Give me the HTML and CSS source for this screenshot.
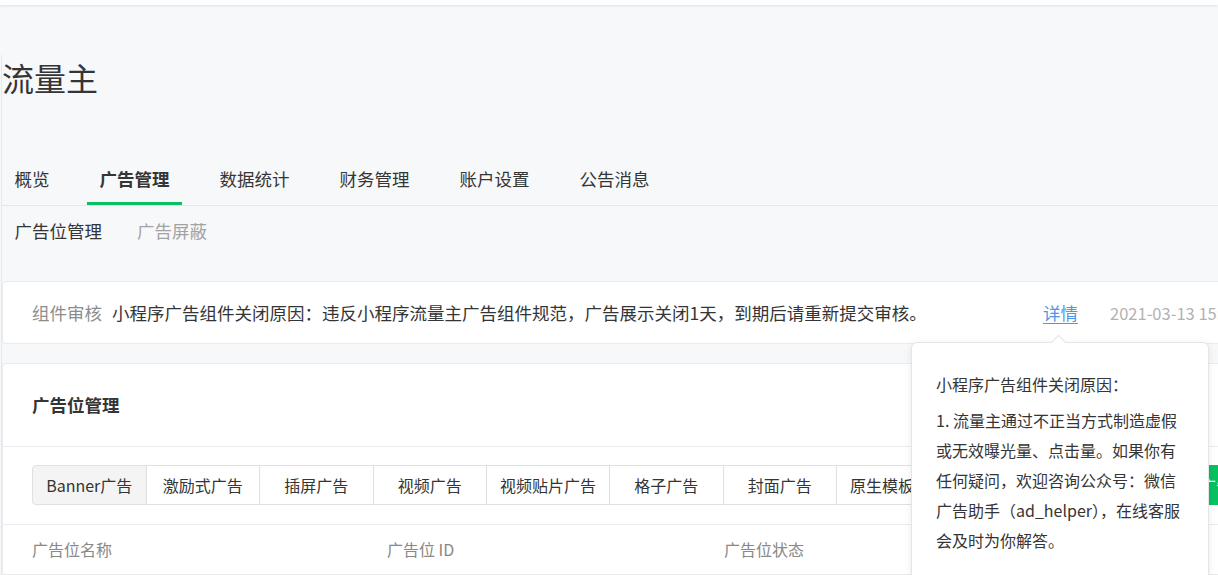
FILE: index.html
```html
<!DOCTYPE html>
<html>
<head>
    <meta charset="utf-8">
    <title>流量主</title>
    <link rel="stylesheet" href="styles.css">
</head>
<body>
    <div class="topbar"></div>
    <div class="page">
        <h1 class="page-title">流量主</h1>

        <ul class="tabs">
            <li>概览</li>
            <li class="active">广告管理</li>
            <li>数据统计</li>
            <li>财务管理</li>
            <li>账户设置</li>
            <li>公告消息</li>
        </ul>

        <ul class="subtabs">
            <li class="active">广告位管理</li>
            <li>广告屏蔽</li>
        </ul>

        <div class="notice">
            <span class="notice-label">组件审核</span>
            <span class="notice-text">小程序广告组件关闭原因：违反小程序流量主广告组件规范，广告展示关闭1天，到期后请重新提交审核。</span>
            <span class="notice-link">
                <a href="#">详情</a>
                <div class="tooltip">
                    <p>小程序广告组件关闭原因：</p>
                    <p>1. 流量主通过不正当方式制造虚假或无效曝光量、点击量。如果你有任何疑问，欢迎咨询公众号：微信广告助手（ad_helper），在线客服会及时为你解答。</p>
                </div>
            </span>
            <span class="notice-time">2021-03-13 15:24:36</span>
        </div>

        <div class="card">
            <div class="card-title">广告位管理</div>
            <div class="toolbar">
                <div class="type-group">
                    <button class="active">Banner广告</button>
                    <button>激励式广告</button>
                    <button>插屏广告</button>
                    <button>视频广告</button>
                    <button>视频贴片广告</button>
                    <button>格子广告</button>
                    <button>封面广告</button>
                    <button>原生模板广告</button>
                </div>
                <button class="btn-primary">新建广告位</button>
            </div>
            <div class="table-head">
                <div>广告位名称</div>
                <div>广告位 ID</div>
                <div>广告位状态</div>
            </div>
        </div>
    </div>
</body>
</html>
```

FILE: styles.css
```css
html, body {
    overflow: hidden;
}

body {
    margin: 0;
    background: #f7f8fa;
    color: #353535;
    font-family: "Noto Sans CJK SC", "Noto Sans", sans-serif;
}

.topbar {
    height: 5px;
    background: #fff;
    box-shadow: 0 1px 3px rgba(0,0,0,0.1);
}

.page {
    width: 1296px;
    margin: 50px 0 0 1px;
    border-left: 1px solid #e7e7eb;
}

.page-title {
    margin: 0;
    font-size: 32px;
    font-weight: normal;
    line-height: 44px;
}

.tabs {
    display: flex;
    list-style: none;
    margin: 0;
    padding: 58px 0 0;
    border-bottom: 1px solid #e7e7eb;
}

    .tabs li {
        padding: 10px 12.5px 11px;
        margin-right: 25px;
        font-size: 17.5px;
        line-height: 24px;
        border-bottom: 3px solid transparent;
    }

        .tabs li.active {
            font-weight: bold;
            border-bottom-color: #07c160;
        }

.subtabs {
    display: flex;
    list-style: none;
    margin: 0 0 38px;
    padding: 13px 0 0 12.5px;
}

    .subtabs li {
        margin-right: 35px;
        font-size: 17.5px;
        line-height: 24px;
        color: #a3a3a3;
    }

        .subtabs li.active {
            color: #353535;
        }

.notice {
    display: flex;
    align-items: center;
    height: 61px;
    padding: 0 29px;
    background: #fff;
    border: 1px solid #ebebef;
    border-radius: 4px;
    font-size: 17.5px;
    margin-bottom: 19px;
}

.notice-label {
    color: #8d8d8d;
    margin-right: 10px;
}

.notice-text {
    flex: 0 0 931px;
}

.notice-link {
    position: relative;
    line-height: 24px;
}

    .notice-link a {
        color: #4f96e8;
        text-decoration: underline;
        text-underline-offset: 3px;
    }

.notice-time {
    margin-left: 32px;
    font-size: 16.5px;
    color: #b2b2b2;
    white-space: nowrap;
}

.tooltip {
    position: absolute;
    top: 41px;
    left: -132px;
    z-index: 10;
    width: 298px;
    box-sizing: border-box;
    padding: 26px 23px 24px 24px;
    background: #fff;
    border: 1px solid #e5e5e5;
    border-radius: 6px;
    box-shadow: 0 2px 8px rgba(0,0,0,0.08);
    font-size: 16px;
    line-height: 30px;
    color: #353535;
}

    .tooltip::before {
        content: "";
        position: absolute;
        top: -6px;
        left: 141px;
        width: 10px;
        height: 10px;
        background: #fff;
        border-top: 1px solid #e5e5e5;
        border-left: 1px solid #e5e5e5;
        transform: rotate(45deg);
    }

    .tooltip p {
        margin: 0;
    }

        .tooltip p + p {
            margin-top: 6px;
        }

.card {
    background: #fff;
    border: 1px solid #ebebef;
    border-radius: 4px;
}

.card-title {
    padding: 0 29px;
    font-size: 17.5px;
    font-weight: bold;
    line-height: 82px;
    border-bottom: 1px solid #ebebef;
}

.toolbar {
    display: flex;
    justify-content: space-between;
    padding: 18px 29px 19px;
    border-bottom: 1px solid #ebebef;
}

.type-group {
    display: flex;
}

    .type-group button {
        min-width: 114.5px;
        height: 40px;
        padding: 0 13px;
        margin-left: -1px;
        font: inherit;
        font-size: 16px;
        color: #353535;
        background: #fff;
        border: 1px solid #e0e0e0;
    }

        .type-group button:first-child {
            margin-left: 0;
            border-radius: 4px 0 0 4px;
        }

        .type-group button.active {
            background: #f4f4f4;
        }

.btn-primary {
    height: 40px;
    padding: 0 20px;
    font: inherit;
    font-size: 16px;
    color: #fff;
    background: #07c160;
    border: none;
    border-radius: 4px;
}

.table-head {
    display: grid;
    grid-template-columns: 355px 337px 1fr;
    padding: 0 29px;
    font-size: 16px;
    line-height: 49px;
    color: #888;
    border-bottom: 1px solid #ebebef;
}
```
